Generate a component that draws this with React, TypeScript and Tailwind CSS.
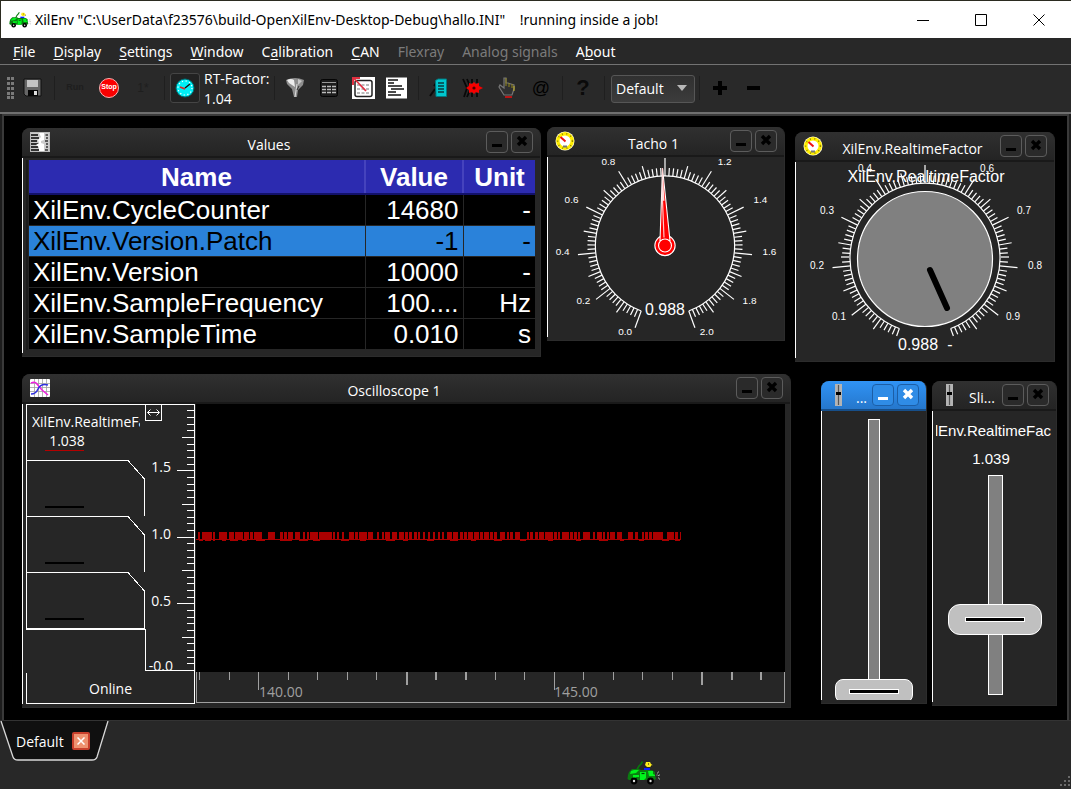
import type { ReactNode } from "react";

type Point = [number, number];

function CarIcon({ className }: { className: string }) {
  return (
    <svg viewBox="0 0 33 24" className={className} aria-hidden="true">
      <path d="M15.5 0.5 L14 3 L12 5 L10 8.5" stroke="#087a0c" strokeWidth="1.6" fill="none" />
      <path d="M2 11 L5 8 H12 L14 9 H25 L28 11 V14 L29 18 L27 19 H2 L0.5 18 L1 14 Z" fill="#0a7d10" />
      <path d="M4 10 L7 9 H12 L9 12 L3 13 Z M6 14 H12 V16 H9 L8 18 H6 Z M13 11 H19 V17 L17 19 H13 Z M21 10 H26 V13 L28 14 V15 H22 Z" fill="#00f51c" />
      <path d="M17 7 H23 V9 H17 Z" fill="#0a22ff" />
      <path d="M19 1 H23 L24 3 L25.5 4 L23 6 H20 L18 4 Z" fill="#ffee1c" />
      <path d="M21 3 h1 M24 5 h1" stroke="#111" strokeWidth="1" />
      <path d="M14.5 12.5 h3" stroke="#053a08" strokeWidth="1.2" />
      <circle cx="7" cy="20" r="3.4" fill="#000" />
      <circle cx="23.5" cy="20" r="3.4" fill="#000" />
      <circle cx="7" cy="20" r="1.2" fill="#ddd" />
      <circle cx="23.5" cy="20" r="1.2" fill="#ddd" />
      <path d="M29.5 14h1M31 11h1M32 14h1M31 17h1M30 12h1M32 18h1M31 14.5h1" stroke="#aaa" strokeWidth="1" />
    </svg>
  );
}

function GaugeIcon() {
  return (
    <svg viewBox="0 0 20 20" className="size-5">
      <circle cx="10" cy="10" r="9.5" fill="#fffbe0" />
      <circle cx="10" cy="10" r="7.2" fill="#fff" stroke="#ffee00" strokeWidth="3.4" />
      <circle cx="10" cy="10" r="7.4" fill="none" stroke="#857b00" strokeWidth="1.4" strokeDasharray="1 3.5" />
      <path d="M5.5 6 L10.5 10.5" stroke="#f01010" strokeWidth="2" />
      <path d="M8 15.5 h4" stroke="#777" strokeWidth="2" />
    </svg>
  );
}

function ValuesIcon() {
  return (
    <svg viewBox="0 0 20 20" className="size-5">
      <path d="M0 0H20V20H0Z" fill="#ccc" />
      <path d="M1 3H8M1 6H9M1 9H7M1 12H9M1 15H8M1 18H10" stroke="#333" strokeWidth="1.8" />
      <path d="M9 1H14V8L11 9V11L14 12V19H9V15L6 13L9 11L8 8L11 5Z" fill="#fff" />
      <path d="M15.5 3H18M16 6H18M15 9H18M16 12H18M16 15H18M15 18H18" stroke="#333" strokeWidth="1.4" />
      <rect x="0.5" y="0.5" width="19" height="19" fill="none" stroke="#bbb" />
    </svg>
  );
}

function ScopeIcon() {
  return (
    <svg viewBox="0 0 20 20" className="size-5">
      <rect width="20" height="18" y="1" rx="1" fill="#fff" />
      <path d="M4.5 1V19M8.5 1V19M12.5 1V19M16.5 1V19M0 5.5H20M0 9.5H20M0 13.5H20" stroke="#a0a0a0" strokeWidth="0.8" />
      <path d="M1 5 Q5 3 7 6 L12 12 L18 17" stroke="#f01ee0" strokeWidth="1.5" fill="none" />
      <path d="M1 16 Q6 16 8 11 Q11 5 18 7" stroke="#3030e0" strokeWidth="1.5" fill="none" />
    </svg>
  );
}

function SliderIcon() {
  return (
    <svg viewBox="0 0 20 22" className="h-[22px] w-5">
      <rect x="6" width="7" height="22" fill="#b4b4b4" />
      <path d="M9.5 1V21" stroke="#555" strokeWidth="1.2" />
      <rect x="7" y="8" width="5" height="3" fill="#000" />
    </svg>
  );
}

function WindowButton({ kind, active }: { kind: "min" | "close"; active?: boolean }) {
  const tone = active
    ? "border-[#1c5ea6] bg-[#2f8ce6] text-white"
    : "border-[#5c5c5c] bg-[#2a2a2a] text-black";
  return (
    <button
      type="button"
      aria-label={kind === "min" ? "Minimize" : "Close"}
      className={`flex size-[22px] shrink-0 items-center justify-center rounded-[4px] border ${tone}`}
    >
      <svg viewBox="0 0 20 20" className="size-5" stroke="currentColor">
        {kind === "min" ? (
          <path d="M5 13.5H15" strokeWidth="3" />
        ) : (
          <path d="M6 5L14 13M14 5L6 13" strokeWidth="3.4" />
        )}
      </svg>
    </button>
  );
}

function SubWindow({
  place,
  icon,
  title,
  active,
  children,
}: {
  place: string;
  icon: ReactNode;
  title: string;
  active?: boolean;
  children: ReactNode;
}) {
  const bar = active
    ? "border-[#174f8a] bg-linear-to-b from-[#3093f5] to-[#2577cc]"
    : "border-[#191919] bg-linear-to-b from-[#303030] to-[#242424]";
  return (
    <section className={`absolute flex flex-col overflow-hidden rounded-t-lg border-r border-b border-[#2c2c2c] bg-[#262626] ${place}`}>
      <header className={`flex h-[30px] shrink-0 items-center gap-[3px] border-b-2 pr-[7px] pl-2 ${bar}`}>
        {icon}
        <h2 className="min-w-0 flex-1 overflow-hidden pt-1 pl-0.5 text-center whitespace-nowrap">{title}</h2>
        <WindowButton kind="min" active={active} />
        <WindowButton kind="close" active={active} />
      </header>
      <div className="mr-1 mb-[3px] flex min-h-0 flex-1 flex-col border-l border-white">{children}</div>
    </section>
  );
}

const rows = [
  ["XilEnv.CycleCounter", "14680", "-"],
  ["XilEnv.Version.Patch", "-1", "-"],
  ["XilEnv.Version", "10000", "-"],
  ["XilEnv.SampleFrequency", "100....", "Hz"],
  ["XilEnv.SampleTime", "0.010", "s"],
];

function ValuesTable() {
  return (
    <div className="mt-0.5 mr-px ml-[3px] border-l-2 border-[#1b1b1b] pl-px">
      <table className="w-full table-fixed border-collapse bg-black font-['Liberation_Sans',sans-serif] text-[26px] leading-[30px] text-white">
        <colgroup>
          <col />
          <col className="w-[98px]" />
          <col className="w-[72px]" />
        </colgroup>
        <thead>
          <tr className="h-[34px] bg-[#2c2bb0]">
            <th className="border-r-2 border-b-2 border-r-[#4543bd] border-b-[#12116a] font-bold">Name</th>
            <th className="border-r-2 border-b-2 border-r-[#4543bd] border-b-[#12116a] font-bold">Value</th>
            <th className="border-b-2 border-b-[#12116a] font-bold">Unit</th>
          </tr>
        </thead>
        <tbody>
          {rows.map(([name, value, unit], i) => (
            <tr key={name} className={i === 1 ? "bg-[#2a82da] text-black" : ""}>
              <td className="border-r border-b border-[#262626] pl-1">{name}</td>
              <td className="border-r border-b border-[#262626] pr-1 text-right">{value}</td>
              <td className="border-b border-[#262626] pr-1 text-right">{unit}</td>
            </tr>
          ))}
        </tbody>
      </table>
    </div>
  );
}

function scaleTicks(radius: number, withEnds: boolean) {
  return Array.from({ length: 101 }, (_, i) => {
    const major = i % 10 === 0 && (withEnds || (i > 0 && i < 100));
    const length = major ? 18 : i % 5 === 0 && i % 10 !== 0 ? 13 : 8;
    const a = ((200 + i * 3.2) * Math.PI) / 180;
    const x = Math.sin(a);
    const y = -Math.cos(a);
    return (
      <line
        key={i}
        x1={x * radius}
        y1={y * radius}
        x2={x * (radius + length)}
        y2={y * (radius + length)}
      />
    );
  });
}

function ScaleLabels({ items }: { items: [string, number, number][] }) {
  return (
    <g className="fill-white font-['Liberation_Sans',sans-serif] text-[10px]" textAnchor="middle">
      {items.map(([label, x, y]) => (
        <text key={label} x={x} y={y + 3}>
          {label}
        </text>
      ))}
    </g>
  );
}

function Tacho() {
  return (
    <svg viewBox="-117 -89 232 181" className="min-h-0 w-full flex-1" role="img" aria-label="Tacho 0.988">
      <g stroke="#fff" strokeWidth="1.2" fill="none">
        {scaleTicks(70, true)}
        <path d="M-23.9 65.8 A70 70 0 1 1 23.9 65.8" />
      </g>
      <ScaleLabels
        items={[
          ["0.0", -40, 87], ["0.2", -82, 56], ["0.4", -103, 7], ["0.6", -94, -46], ["0.8", -57, -84],
          ["1.2", 60, -84], ["1.4", 96, -46], ["1.6", 105, 7], ["1.8", 85, 56], ["2.0", 42, 87],
        ]}
      />
      <circle r="10.2" fill="#ff0000" stroke="#fff" strokeWidth="1.1" />
      <path d="M-5 -5 L-2.5 -78 L5 -5 Z" fill="#ff0000" stroke="#fff" strokeWidth="1.1" />
      <path d="M-2.5 -78 L-2.5 -45 L-1 -8" stroke="#ffc8c8" strokeWidth="1.2" fill="none" />
      <path d="M-2.5 -78 L-3.4 -45 L-0.5 -45 Z" fill="#ffdede" />
      <circle r="6.5" fill="#ff0000" stroke="#fff" strokeWidth="1.1" />
      <text x="0" y="70" textAnchor="middle" className="fill-white font-['Liberation_Sans',sans-serif] text-[16px]">
        0.988
      </text>
    </svg>
  );
}

function Knob() {
  return (
    <svg viewBox="-129 -96 254 196" className="min-h-0 w-full flex-1" role="img" aria-label="Knob 0.988">
      <g className="fill-white font-['Liberation_Sans',sans-serif] text-[16px]" textAnchor="middle">
        <text x="1" y="-76">XilEnv.RealtimeFactor</text>
        <text x="-7" y="92">0.988</text>
        <text x="25" y="92">-</text>
      </g>
      <g stroke="#fff" strokeWidth="1.2" fill="none">
        {scaleTicks(75, false)}
        <path d="M-25.7 70.5 A75 75 0 1 1 25.7 70.5" />
        <path d="M-84 -1H-75M75 -1H84" stroke="#b0b0b0" strokeWidth="2" />
      </g>
      <ScaleLabels
        items={[
          ["0.1", -86, 59], ["0.2", -108, 8], ["0.3", -98, -47], ["0.4", -60, -89],
          ["0.6", 62, -89], ["0.7", 99, -47], ["0.8", 110, 8], ["0.9", 88, 59],
        ]}
      />
      <circle cy="1" r="67.5" fill="#808080" stroke="#fff" strokeWidth="1.2" />
      <path d="M5 12 L22 50" stroke="#000" strokeWidth="6" strokeLinecap="round" />
    </svg>
  );
}

const pulses: Point[] = [
  [1, 2], [5, 10], [16, 2], [22, 8], [32, 5], [38, 8], [47, 5], [53, 3], [57, 8], [71, 7], [83, 3], [87, 3],
  [91, 5], [98, 5], [106, 2], [110, 2], [113, 8], [122, 13], [136, 2], [140, 2], [145, 2], [152, 5], [158, 3],
  [162, 8], [171, 5], [180, 2], [185, 2], [188, 5], [195, 5], [202, 5], [208, 3], [212, 3], [217, 3], [221, 2],
  [226, 2], [231, 2], [236, 2], [241, 2], [245, 2], [250, 5], [256, 5], [263, 3], [267, 3], [271, 5], [277, 5],
  [283, 3], [287, 5], [293, 3], [297, 3], [303, 5], [310, 2], [313, 3], [318, 5], [330, 2], [333, 3], [338, 3],
  [342, 5], [348, 8], [357, 3], [361, 2], [365, 7], [373, 3], [377, 3], [381, 2], [386, 7], [396, 2], [400, 5],
  [406, 2], [410, 2], [413, 5], [420, 5], [431, 5], [438, 3], [445, 2], [448, 3], [452, 3], [456, 10], [470, 7],
  [478, 3], [483, 1],
];

function Channel({ name, value }: { name?: string; value?: string }) {
  return (
    <div className={`relative w-[119px] border-l border-white ${name ? "h-[55px]" : "h-14"}`}>
      <svg viewBox="0 0 118 56" preserveAspectRatio="xMinYMin slice" className="absolute inset-0 size-full" fill="none" shapeRendering="crispEdges">
        {name ? (
          <rect x="18" y="45" width="39" height="1" fill="#b40000" />
        ) : (
          <>
            <path d="M0 0.5H101L117.5 19V56" stroke="#fff" />
            <path d="M18 47H57" stroke="#000" strokeWidth="1.5" />
          </>
        )}
      </svg>
      {name && (
        <div className="relative pt-[7px] pl-[5px]">
          <div className="w-[108px] overflow-hidden leading-[19px] whitespace-nowrap">{name}</div>
          <div className="w-[70px] text-center leading-[19px]">{value}</div>
        </div>
      )}
    </div>
  );
}

function Oscilloscope() {
  return (
    <div className="mr-px flex min-h-0 flex-1 pl-[3px]">
      <div className="flex w-[169px] flex-col border-t border-r border-b border-white">
        <div className="flex min-h-0 flex-1">
          <div className="w-[119px]">
            <Channel name="XilEnv.RealtimeFactor" value="1.038" />
            <Channel />
            <Channel />
            <Channel />
            <div className="h-0.5 w-[119px] bg-white" />
          </div>
          <svg viewBox="0 0 49 268" className="min-h-0 w-[49px]" shapeRendering="crispEdges" fill="none" stroke="#fff">
            <rect x="0.5" y="-0.5" width="16" height="16" />
            <path d="M2.5 7.5H14M5.5 4.5L2.5 7.5L5.5 10.5M11.5 4.5L14.5 7.5L11.5 10.5" shapeRendering="auto" />
            <path d="M0.5 224V265.5H49" />
            {Array.from({ length: 40 }, (_, k) => {
              const y = Math.round(265 - k * 6.66) + 0.5;
              const length = k % 10 === 0 ? 17 : k % 5 === 0 ? 12 : 7;
              return <line key={k} x1={49 - length} x2={49} y1={y} y2={y} />;
            })}
            <g className="fill-white text-[14px]" stroke="none" textAnchor="end">
              <text x="26" y="67">1.5</text>
              <text x="26" y="134">1.0</text>
              <text x="26" y="201">0.5</text>
              <text x="28" y="266">-0.0</text>
            </g>
          </svg>
        </div>
        <div className="h-[30px] border-l border-white text-center leading-8">Online</div>
      </div>
      <div className="ml-px flex min-w-0 flex-1 flex-col">
        <div className="min-h-0 flex-1 bg-black">
          <svg viewBox="0 0 589 267" preserveAspectRatio="xMinYMin meet" className="size-full" shapeRendering="crispEdges" fill="#ab0000" role="img" aria-label="XilEnv.RealtimeFactor signal">
            <rect x="0" y="135" width="485" height="1" />
            {pulses.map(([x, w]) => (
              <rect key={x} x={x + 1} y="128" width={w} height="8" />
            ))}
            <path d="M3 136h4M9 136h6M17 136h2M26 136h4M34 136h8M46 136h5M60 136h9M84 136h12M103 136h9M117 136h7M145 136h8M164 136h6M190 136h9M207 136h5M231 136h7M254 136h8M275 136h5M298 136h8M324 136h6M352 136h5M380 136h5M403 136h9M424 136h4M443 136h5M466 136h7M479 136h5" stroke="#ab0000" strokeWidth="2" />
          </svg>
        </div>
        <svg viewBox="0 0 589 32" preserveAspectRatio="xMinYMin meet" className="h-8 w-full shrink-0" shapeRendering="crispEdges" stroke="#a0a0a0" fill="none">
          <path d="M0.5 0V30.5H588.5V0" />
          {Array.from({ length: 20 }, (_, k) => {
            const x = Math.round(3 + k * 29.55) + 0.5;
            const length = k === 2 || k === 12 ? 18 : k === 7 || k === 17 ? 13 : 8;
            return <line key={k} x1={x} x2={x} y1="0" y2={length} strokeWidth={k % 10 > 6 ? 2 : 1} />;
          })}
          <g className="fill-[#a0a0a0] text-[14px]" stroke="none">
            <text x="63" y="25">140.00</text>
            <text x="358" y="25">145.00</text>
          </g>
        </svg>
      </div>
    </div>
  );
}

const rangeBase =
  "m-0 block cursor-pointer appearance-none bg-no-repeat bg-center [writing-mode:vertical-lr] [direction:rtl] [&::-webkit-slider-thumb]:appearance-none [&::-webkit-slider-thumb]:border [&::-webkit-slider-thumb]:border-white [&::-webkit-slider-thumb]:bg-[#c0c0c0] [&::-webkit-slider-thumb]:bg-no-repeat [&::-webkit-slider-thumb]:bg-center [&::-webkit-slider-thumb]:[background-image:linear-gradient(#000,#000),linear-gradient(#fff,#fff)] [background-image:linear-gradient(#808080,#808080),linear-gradient(#fff,#fff)]";

function ToolButton({ label, children, boxed }: { label: string; children: ReactNode; boxed?: boolean }) {
  return (
    <button type="button" aria-label={label} className="flex h-[34px] w-[34px] shrink-0 items-center justify-center">
      <span
        className={
          boxed
            ? "flex size-[30px] items-center justify-center rounded-[3px] border border-[#454545] bg-[#222]"
            : "flex size-6 items-center justify-center"
        }
      >
        {children}
      </span>
    </button>
  );
}

function Separator() {
  return (
    <div className="flex w-2 shrink-0 justify-center">
      <div className="h-6 w-px bg-[#1f1f1f]" />
    </div>
  );
}

function Toolbar() {
  return (
    <div className="flex h-[47px] items-center bg-[#292929] pb-0.5">
      <svg viewBox="0 0 16 22" className="h-[22px] w-4 shrink-0" fill="#7a7a7a">
        {[0, 5, 10, 15, 19].map((y) => (
          <path key={y} d={`M7 ${y}h3v3h-3zM11 ${y}h3v3h-3z`} />
        ))}
      </svg>
      <ToolButton label="Save">
        <svg viewBox="0 0 20 20" className="size-5">
          <path d="M1 1H18V18H3L1 16Z" fill="#666" stroke="#111" />
          <path d="M4 2H15V9H4Z" fill="#c4c4c4" />
          <path d="M5 12H15V18H5Z" fill="#050505" />
          <path d="M11 13H14V17H11Z" fill="#ddd" />
        </svg>
      </ToolButton>
      <Separator />
      <ToolButton label="Run">
        <span className="font-['Liberation_Sans',sans-serif] text-[9px] font-bold text-[#1e1e1e]">Run</span>
      </ToolButton>
      <ToolButton label="Stop">
        <span className="flex size-5 items-center justify-center rounded-full border border-[#ffb0b0] bg-[#fa0000] font-['Liberation_Sans',sans-serif] text-[7px] font-bold text-white">
          Stop
        </span>
      </ToolButton>
      <ToolButton label="Single step">
        <span className="font-['Liberation_Sans',sans-serif] text-[12px] text-[#1e1e1e]">1*</span>
      </ToolButton>
      <Separator />
      <ToolButton label="Clock" boxed>
        <svg viewBox="0 0 20 20" className="size-5">
          <circle cx="10" cy="10" r="9" fill="#00eef5" stroke="#006b70" />
          <circle cx="10" cy="10" r="7" fill="none" stroke="#fff" strokeWidth="1.2" strokeDasharray="1.2 2.5" />
          <path d="M10 10L15 6" stroke="#111" strokeWidth="1.5" />
          <path d="M10 11L5 9" stroke="#e02020" strokeWidth="1.8" />
        </svg>
      </ToolButton>
      <div className="w-[68px] shrink-0 pt-0.5 pl-0.5 leading-5 whitespace-nowrap">
        RT-Factor:
        <br />
        1.04
      </div>
      <Separator />
      <ToolButton label="Filter">
        <svg viewBox="0 0 20 21" className="h-[21px] w-5">
          <path d="M1 3Q10 -1 19 3L18 8L13 13L12 20H9L7 12L2 7Z" fill="#8e8e8e" />
          <path d="M2 3Q6 1 9 3L10 10L4 6Z" fill="#eee" />
          <path d="M13 2L17 4L13 8Z" fill="#c8c8c8" />
          <path d="M12 7L10 20" stroke="#ddd" />
          <path d="M14 9L12 13" stroke="#333" />
        </svg>
      </ToolButton>
      <ToolButton label="Table">
        <svg viewBox="0 0 18 18" className="size-[18px]">
          <rect x="0.5" y="0.5" width="17" height="17" rx="2" fill="#1c1c1c" stroke="#050505" />
          <path d="M2 3.5H16" stroke="#999" />
          <path d="M2 7.5H16M2 10.5H16M2 13.5H16" stroke="#bbb" strokeWidth="1.4" strokeDasharray="4 1" />
        </svg>
      </ToolButton>
      <ToolButton label="Edit display">
        <svg viewBox="0 0 23 22" className="h-[22px] w-[23px]">
          <path d="M0 0H23V22H0Z" fill="#fff" />
          <rect x="3" y="3.5" width="17" height="16" rx="2" fill="#fff" stroke="#222" strokeWidth="1.5" />
          <path d="M5 8H18M5 12H18M5 16H18" stroke="#777" strokeDasharray="3 1.5" />
          <path d="M2 1.5L14 14" stroke="#e03040" strokeWidth="1.8" />
          <path d="M1 8V1H8" stroke="#e03040" strokeWidth="2" fill="none" />
        </svg>
      </ToolButton>
      <ToolButton label="Text view">
        <svg viewBox="0 0 22 22" className="size-[22px]">
          <path d="M0 0.5H21V21.5H0Z" fill="#fff" />
          <path d="M2 3H12M2 6H8M2 9H16M5 12H18M2 15H10M2 18H15" stroke="#111" strokeWidth="1.6" />
        </svg>
      </ToolButton>
      <Separator />
      <ToolButton label="Reference list">
        <svg viewBox="0 0 20 20" className="size-5">
          <path d="M1 18L6 11M7 4V16M5 8L8 4" stroke="#0a0a0a" strokeWidth="2" fill="none" />
          <path d="M6.5 2.5L9 1H17.5V18.5H7Z" fill="#00c6ce" stroke="#007a80" />
          <path d="M9 5H15M9 8H15M9 11H15M9 14H15" stroke="#063c40" strokeWidth="1.3" />
        </svg>
      </ToolButton>
      <ToolButton label="Process settings">
        <svg viewBox="0 0 22 20" className="h-5 w-[22px]">
          <path d="M1 1L5 10L2 19M5 1L8 8M5 19L8 12M10 1V5M15 1V5M10 15V19M15 15V19" stroke="#080808" strokeWidth="1.8" fill="none" />
          <path d="M12 4L14 6L17 5V8L21 10L17 12V15L14 14L12 16L10 14L7 15V12L4 10L7 8V5L10 6Z" fill="#f50000" />
          <circle cx="12" cy="10" r="1.6" fill="#4a0000" />
        </svg>
      </ToolButton>
      <ToolButton label="Point">
        <svg viewBox="0 0 20 21" className="h-[21px] w-5">
          <path d="M7 1V11L3 8L2 10L7 18H15L17 12V8L14 7L11 6L9 6V1Z" fill="#303030" stroke="#777" strokeWidth="1.2" />
          <path d="M9 1V9M12 6V10M15 7V11" stroke="#91861a" />
          <path d="M8 20H15" stroke="#b91515" strokeWidth="2" />
          <path d="M17 9V14" stroke="#c6b423" />
        </svg>
      </ToolButton>
      <ToolButton label="Mail">
        <span className="font-['Liberation_Sans',sans-serif] text-[18px] leading-5 text-black">@</span>
      </ToolButton>
      <Separator />
      <ToolButton label="Help">
        <span className="font-['Liberation_Sans',sans-serif] text-[22px] leading-6 font-bold text-[#0a0a0a]">?</span>
      </ToolButton>
      <Separator />
      <label className="relative ml-[3px] flex shrink-0 pt-0.5">
        <span className="sr-only">Desktop</span>
        <select className="h-7 w-[84px] appearance-none rounded-[3px] border border-[#565656] bg-linear-to-b from-[#303030] to-[#3c3c3c] pl-1 text-white">
          <option>Default</option>
        </select>
        <svg viewBox="0 0 10 6" className="pointer-events-none absolute top-[12px] right-2 h-1.5 w-2.5">
          <path d="M0 0H10L5 6Z" fill="#b8b8b8" />
        </svg>
      </label>
      <Separator />
      <ToolButton label="Add desktop">
        <svg viewBox="0 0 14 14" className="size-3.5">
          <path d="M7 0V14M0 7H14" stroke="#000" strokeWidth="4" />
        </svg>
      </ToolButton>
      <ToolButton label="Remove desktop">
        <svg viewBox="0 0 14 14" className="size-3.5">
          <path d="M0 7H13" stroke="#000" strokeWidth="4" />
        </svg>
      </ToolButton>
    </div>
  );
}

const menus: { pre: string; key: string; post: string; off?: boolean }[] = [
  { pre: "", key: "F", post: "ile" },
  { pre: "", key: "D", post: "isplay" },
  { pre: "", key: "S", post: "ettings" },
  { pre: "", key: "W", post: "indow" },
  { pre: "C", key: "a", post: "libration" },
  { pre: "", key: "C", post: "AN" },
  { pre: "Flexray", key: "", post: "", off: true },
  { pre: "Analog signals", key: "", post: "", off: true },
  { pre: "A", key: "b", post: "out" },
];

export default function App() {
  return (
    <div className="flex min-h-screen flex-col bg-[#282828] font-['Open_Sans',sans-serif] text-[14px] text-white">
      <header className="flex h-[38px] shrink-0 items-center border-t border-l border-[#2b2b20] bg-white pr-[3px] pl-2 text-black">
        <CarIcon className="h-4 w-[22px]" />
        <h1 className="flex-1 pl-1 font-['Noto_Sans',sans-serif] whitespace-pre">{'XilEnv "C:\\UserData\\f23576\\build-OpenXilEnv-Desktop-Debug\\hallo.INI"    !running inside a job!'}</h1>
        <div className="flex">
          {[
            ["Minimize", "M0 6.5H12"],
            ["Maximize", "M0.5 0.5H11.5V11.5H0.5Z"],
            ["Close", "M0.5 0.5L11.5 11.5M11.5 0.5L0.5 11.5"],
          ].map(([label, d]) => (
            <button key={label} type="button" aria-label={label} className="flex h-9 w-[58px] items-center justify-center">
              <svg viewBox="0 0 12 12" className="size-3" fill="none" stroke="#000">
                <path d={d} />
              </svg>
            </button>
          ))}
        </div>
      </header>

      <nav className="flex h-[27px] shrink-0 items-center border-b border-[#737373] pl-1 font-['Noto_Sans',sans-serif]">
        {menus.map((m) => (
          <button key={m.pre + m.key + m.post} type="button" disabled={m.off} className={`px-[9px] ${m.off ? "text-[#7b7b7b]" : ""}`}>
            {m.pre}
            <span className="underline underline-offset-2">{m.key}</span>
            {m.post}
          </button>
        ))}
      </nav>

      <Toolbar />

      <main className="flex flex-1 border-t-2 border-[#6f6f6f] bg-[#1d1d1d] px-0.5">
        <div className="relative flex-1 overflow-hidden border-x-2 border-t-2 border-[#3a3a3a] bg-black">
          <SubWindow place="left-[18px] top-[12px] w-[519px] h-[229px]" icon={<ValuesIcon />} title="Values">
            <ValuesTable />
          </SubWindow>
          <SubWindow place="left-[543px] top-[11px] w-[238px] h-[214px]" icon={<GaugeIcon />} title="Tacho 1">
            <Tacho />
          </SubWindow>
          <SubWindow place="left-[791px] top-[16px] w-[260px] h-[230px]" icon={<GaugeIcon />} title="XilEnv.RealtimeFactor">
            <Knob />
          </SubWindow>
          <SubWindow place="left-[18px] top-[258px] w-[769px] h-[334px]" icon={<ScopeIcon />} title="Oscilloscope 1">
            <Oscilloscope />
          </SubWindow>
          <SubWindow place="left-[817px] top-[265px] w-[106px] h-[323px]" icon={<SliderIcon />} title="..." active>
            <div className="flex min-h-0 flex-1 justify-center overflow-hidden pt-2 pl-[3px]">
              <input
                type="range"
                aria-label="Slider"
                min={0}
                max={1000}
                defaultValue={0}
                className={`${rangeBase} h-[284px] w-[78px] shrink-0 [background-size:10px_calc(100%-2px),12px_100%] [&::-webkit-slider-thumb]:h-6 [&::-webkit-slider-thumb]:w-[78px] [&::-webkit-slider-thumb]:rounded-[8px] [&::-webkit-slider-thumb]:[background-size:48px_3px,50px_5px]`}
              />
            </div>
          </SubWindow>
          <SubWindow place="left-[928px] top-[265px] w-[125px] h-[325px]" icon={<SliderIcon />} title="Sli...">
            <div className="mr-px ml-[3px] flex justify-center overflow-hidden pt-2.5 pl-[3px] font-['Liberation_Sans',sans-serif] text-[15px] leading-5 whitespace-nowrap">
              XilEnv.RealtimeFactor
            </div>
            <div className="pt-2 pr-[3px] text-center font-['Liberation_Sans',sans-serif] text-[15px] leading-5">1.039</div>
            <div className="flex justify-center pt-1.5 pl-[5px]">
              <input
                type="range"
                aria-label="XilEnv.RealtimeFactor"
                min={0}
                max={1000}
                defaultValue={317}
                className={`${rangeBase} h-[220px] w-[94px] shrink-0 [background-size:13px_calc(100%-2px),15px_100%] [&::-webkit-slider-thumb]:h-[31px] [&::-webkit-slider-thumb]:w-[94px] [&::-webkit-slider-thumb]:rounded-[12px] [&::-webkit-slider-thumb]:[background-size:58px_3px,60px_5px]`}
              />
            </div>
          </SubWindow>
        </div>
      </main>

      <footer className="flex h-[69px] shrink-0 items-start border-t border-[#333]">
        <div className="relative flex h-10 w-[109px] items-center gap-2 pl-4">
          <svg viewBox="0 0 109 40" className="absolute inset-0 size-full">
            <path d="M1 0L13 36Q14 39 18 39H92Q96 39 97 36L108 0" fill="#101010" stroke="#d8d8d8" strokeWidth="1.3" />
          </svg>
          <span className="relative">Default</span>
          <button type="button" aria-label="Close tab" className="relative flex size-[18px] items-center justify-center rounded-[2px] border-2 border-[#c8402c] bg-[#ee9270]">
            <svg viewBox="0 0 8 8" className="size-2">
              <path d="M0.5 0.5L7.5 7.5M7.5 0.5L0.5 7.5" stroke="#fff" strokeWidth="1.5" />
            </svg>
          </button>
        </div>
        <div className="flex flex-1 self-end pb-1">
          <div className="flex-1" />
          <CarIcon className="h-6 w-[33px]" />
          <div className="w-[397px]" />
        </div>
        <svg viewBox="0 0 14 14" className="mb-px size-3.5 self-end" fill="#6a6a6a" aria-hidden="true">
          <path d="M11 2h2v2h-2zM11 6h2v2h-2zM7 6h2v2H7zM11 10h2v2h-2zM7 10h2v2H7zM3 10h2v2H3z" />
        </svg>
      </footer>
    </div>
  );
}
